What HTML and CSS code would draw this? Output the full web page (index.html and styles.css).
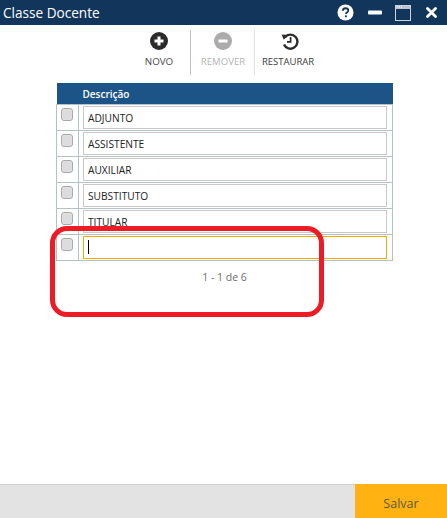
FILE: index.html
```html
<!DOCTYPE html>
<html lang="pt">
<head>
<meta charset="utf-8">
<title>Classe Docente</title>
<link rel="stylesheet" href="styles.css">
</head>
<body>
<div class="app">
  <header class="titlebar">
    <span class="title">Classe Docente</span>
    <div class="win-icons">
      <svg class="wi wi-help" viewBox="0 0 18 18"><circle cx="9" cy="9" r="8.5" fill="#fff"/><path d="M6.2 7.2c0-1.7 1.2-2.7 2.9-2.7s2.8 1 2.8 2.4c0 1.1-.6 1.7-1.4 2.2-.7.5-1 .8-1 1.6" fill="none" stroke="#12355b" stroke-width="1.9"/><rect x="8.4" y="12" width="2" height="2" fill="#12355b"/></svg>
      <svg class="wi wi-min" viewBox="0 0 14 5"><rect width="14" height="4" y="0.5" rx="1" fill="#fff"/></svg>
      <svg class="wi wi-max" viewBox="0 0 16 16"><rect x="0.5" y="0.5" width="15" height="15" fill="none" stroke="#c9d3dd" stroke-width="1"/><rect x="1" y="1" width="14" height="3" fill="#b9c5d1"/><path d="M2 2h1M4 2h1M6 2h1" stroke="#fff"/></svg>
      <svg class="wi wi-close" viewBox="0 0 11 11"><path d="M1.5 1.5l8 8M9.5 1.5l-8 8" stroke="#fff" stroke-width="2.8" stroke-linecap="round"/></svg>
    </div>
  </header>

  <nav class="toolbar">
    <div class="tool tool-new">
      <svg class="tool-icon" viewBox="0 0 18 18"><circle cx="9" cy="9" r="9" fill="#2b2b2b"/><path d="M9 4.5v9M4.5 9h9" stroke="#fff" stroke-width="3"/></svg>
      <span>NOVO</span>
    </div>
    <div class="tool tool-remove">
      <svg class="tool-icon" viewBox="0 0 18 18"><circle cx="9" cy="9" r="9" fill="#ababab"/><path d="M4.5 9h9" stroke="#fff" stroke-width="3"/></svg>
      <span>REMOVER</span>
    </div>
    <div class="tool tool-restore">
      <svg class="tool-icon" viewBox="0 0 18 18"><path d="M4 5.2A7 7 0 1 1 3 12.5" fill="none" stroke="#2b2b2b" stroke-width="2.4"/><path d="M0.6 2.6l6.6.4-4.4 4.8z" fill="#2b2b2b"/><path d="M9.6 5v4.8H6" fill="none" stroke="#2b2b2b" stroke-width="1.7"/></svg>
      <span>RESTAURAR</span>
    </div>
  </nav>

  <main class="content">
    <table class="grid">
      <thead>
        <tr><th class="col-check"></th><th class="col-desc">Descrição</th></tr>
      </thead>
      <tbody>
        <tr><td class="col-check"><span class="check"></span></td><td class="col-desc"><div class="field">ADJUNTO</div></td></tr>
        <tr><td class="col-check"><span class="check"></span></td><td class="col-desc"><div class="field">ASSISTENTE</div></td></tr>
        <tr><td class="col-check"><span class="check"></span></td><td class="col-desc"><div class="field">AUXILIAR</div></td></tr>
        <tr><td class="col-check"><span class="check"></span></td><td class="col-desc"><div class="field">SUBSTITUTO</div></td></tr>
        <tr><td class="col-check"><span class="check"></span></td><td class="col-desc"><div class="field">TITULAR</div></td></tr>
        <tr><td class="col-check"><span class="check"></span></td><td class="col-desc"><div class="field field-active"><i class="caret"></i></div></td></tr>
      </tbody>
    </table>
    <p class="pager">1 - 1 de 6</p>
    <div class="annotation"></div>
  </main>

  <footer class="footer">
    <div class="save">Salvar</div>
  </footer>
</div>
</body>
</html>
```
FILE: styles.css
```css
* { box-sizing: border-box; }
html, body { margin: 0; height: 100%; }
body { background: #fff; font-family: "Open Sans", "Liberation Sans", sans-serif; color: #333; overflow: hidden; }
.app { display: flex; flex-direction: column; height: 518px; width: 447px; }

.titlebar { height: 25px; flex: none; background: #12355b; display: flex; align-items: center; justify-content: space-between; }
.title { color: #fff; font-size: 13.6px; margin-left: 3px; }
.win-icons { display: flex; align-items: center; }
.wi { display: block; }
.wi-help { width: 17px; height: 17px; margin-right: 14px; }
.wi-min { width: 14px; height: 5px; margin-right: 13px; }
.wi-max { width: 16px; height: 16px; margin-right: 15px; }
.wi-close { width: 11px; height: 11px; margin-right: 10px; }

.toolbar { height: 50px; flex: none; padding: 5px 0 0 127px; display: flex; align-items: flex-start; }
.tool { height: 45px; display: flex; flex-direction: column; align-items: center; padding-top: 2px; font-size: 9.5px; color: #4a4a4a; }
.tool span { margin-top: 5px; line-height: 14px; white-space: nowrap; }
.tool-icon { width: 18px; height: 18px; display: block; }
.tool-new { width: 64px; border-right: 1px solid #c4c4c4; }
.tool-new span { margin-left: 1px; font-size: 9.8px; }
.tool-remove { width: 64px; border-right: 1px solid #e2e2e2; color: #b4b4b4; }
.tool-remove span { font-size: 9.6px; margin-left: 1px; }
.tool-restore { width: 69px; color: #3a3a3a; }
.tool-restore span { margin-left: -3px; }

.content { position: relative; flex: 1; padding: 8px 54px 0 56px; }
.grid { width: 337px; border-collapse: collapse; table-layout: fixed; }
.grid th { height: 21px; background: #1d5488; color: #fff; font-size: 10px; font-weight: 600; text-align: left; padding: 2px 0 0 4px; }
.grid th.col-check { padding: 0; }
.grid td { height: 26px; border: 1px solid #b4c2c8; padding: 0; vertical-align: middle; }
.col-check { width: 22px; }
.grid td.col-check { text-align: center; vertical-align: top; padding-top: 3px; }
.grid td.col-desc { padding: 0 5px 0 4px; }
.check { display: block; width: 12px; height: 13px; margin: 0 auto 0 4px; background: #dcdcdc; border: 1px solid #a9a9a9; border-radius: 3px; box-shadow: inset 0 0 1px #fff; }
.field { height: 23px; border: 1px solid #c8c8c8; font-size: 10.2px; line-height: 23px; padding-left: 4px; color: #222; background: #fff; }
.field-active { border-color: #f5a800; display: flex; align-items: center; }
.caret { display: block; width: 1px; height: 14px; background: #000; }
.pager { margin: 9px 0 0; text-align: center; font-size: 10.5px; color: #6f6a70; line-height: 14px; width: 337px; }

.annotation { position: absolute; left: 50px; top: 151px; width: 274px; height: 91px; border: 5px solid #ed1c24; border-radius: 17px; }

.footer { height: 34px; flex: none; background: #e3e3e3; border-top: 1px solid #d0d0d0; display: flex; justify-content: flex-end; }
.save { width: 92px; background: #ffb212; margin-top: -1px; color: #5c5a3c; font-size: 12.5px; display: flex; align-items: center; justify-content: center; padding-top: 5px; }
```
